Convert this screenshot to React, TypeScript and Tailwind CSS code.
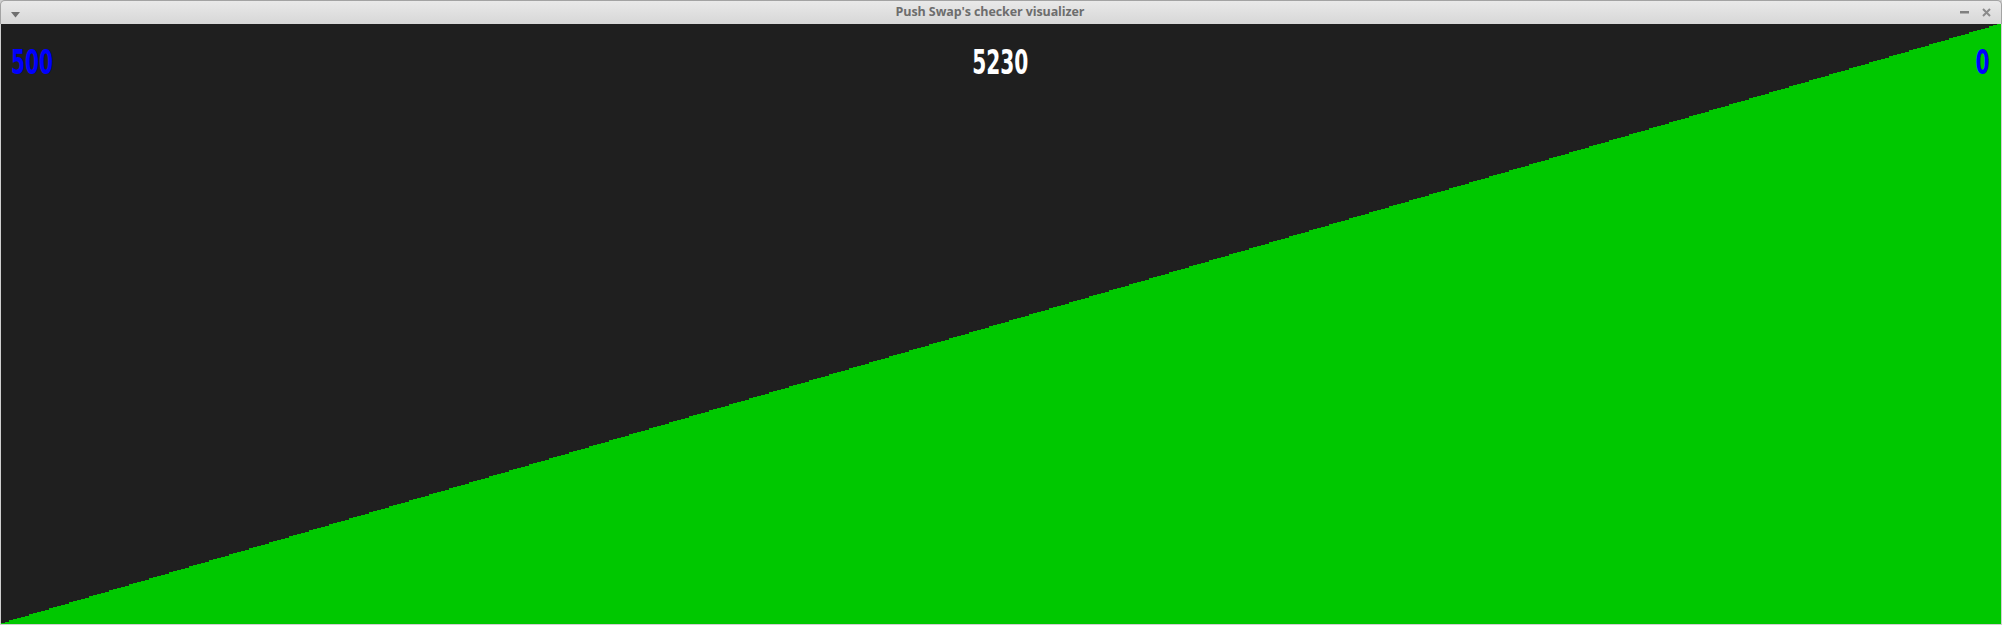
import React from 'react';

const COUNT = 500;
const WIDTH = 2000;
const HEIGHT = 600;

// staircase outline of the sorted stack, one 4px bar per value
const barsPath = () => {
  const w = WIDTH / COUNT;
  let d = `M0 ${HEIGHT}`;
  for (let i = 0; i < COUNT; i++) {
    const h = Math.round(((i + 1) * HEIGHT) / COUNT);
    d += ` L${i * w} ${HEIGHT - h} L${(i + 1) * w} ${HEIGHT - h}`;
  }
  return d + ` L${WIDTH} ${HEIGHT} Z`;
};

const TitleBar = () => (
  <div className="h-[24px] flex items-center justify-between px-[10px] rounded-t-[5px] border-t border-x border-[#a3a3a3] bg-gradient-to-b from-[#e9e9e9] to-[#d7d7d7]">
    <svg width="9" height="6" viewBox="0 0 9 6" className="mt-[4px]">
      <path d="M0 0 L9 0 L4.5 5.5 Z" fill="#6f6f6f" />
    </svg>
    <span className="text-[12.5px] font-bold text-[#6d6d6d] font-['Open_Sans','Noto_Sans',sans-serif] tracking-[-0.1px]">
      Push Swap's checker visualizer
    </span>
    <div className="flex items-center gap-[13px]">
      <svg width="9" height="3" viewBox="0 0 9 3">
        <rect x="0" y="0" width="9" height="2.5" fill="#808080" />
      </svg>
      <svg width="9" height="9" viewBox="0 0 9 9">
        <path d="M1 1 L8 8 M8 1 L1 8" stroke="#8a8a8a" strokeWidth="2" />
      </svg>
    </div>
  </div>
);

const Counter = ({ value, color }: { value: string; color: string }) => (
  <span
    className={`inline-block text-[33px] leading-none font-bold font-['Liberation_Sans_Narrow','DejaVu_Sans_Condensed',sans-serif] scale-x-[0.68] ${color}`}
  >
    {value}
  </span>
);

export default function App() {
  return (
    <div className="w-[2002px] h-[625px] bg-[#cfcfcf] flex flex-col overflow-hidden">
      <TitleBar />
      <div className="relative flex-1 mx-[1px] mb-[1px] bg-[#1f1f1f]">
        <svg width={WIDTH} height={HEIGHT} viewBox={`0 0 ${WIDTH} ${HEIGHT}`} className="block" shapeRendering="crispEdges">
          <path d={barsPath()} fill="#00c800" />
        </svg>
        <div className="absolute inset-x-0 top-[22px] flex items-start justify-between pl-[10px] pr-[11px]">
          <div className="w-[60px]">
            <Counter value="500" color="text-[#0000ff] origin-left" />
          </div>
          <Counter value="5230" color="text-white" />
          <div className="w-[60px] flex justify-end">
            <Counter value="0" color="text-[#0000ff] origin-right" />
          </div>
        </div>
      </div>
    </div>
  );
}
